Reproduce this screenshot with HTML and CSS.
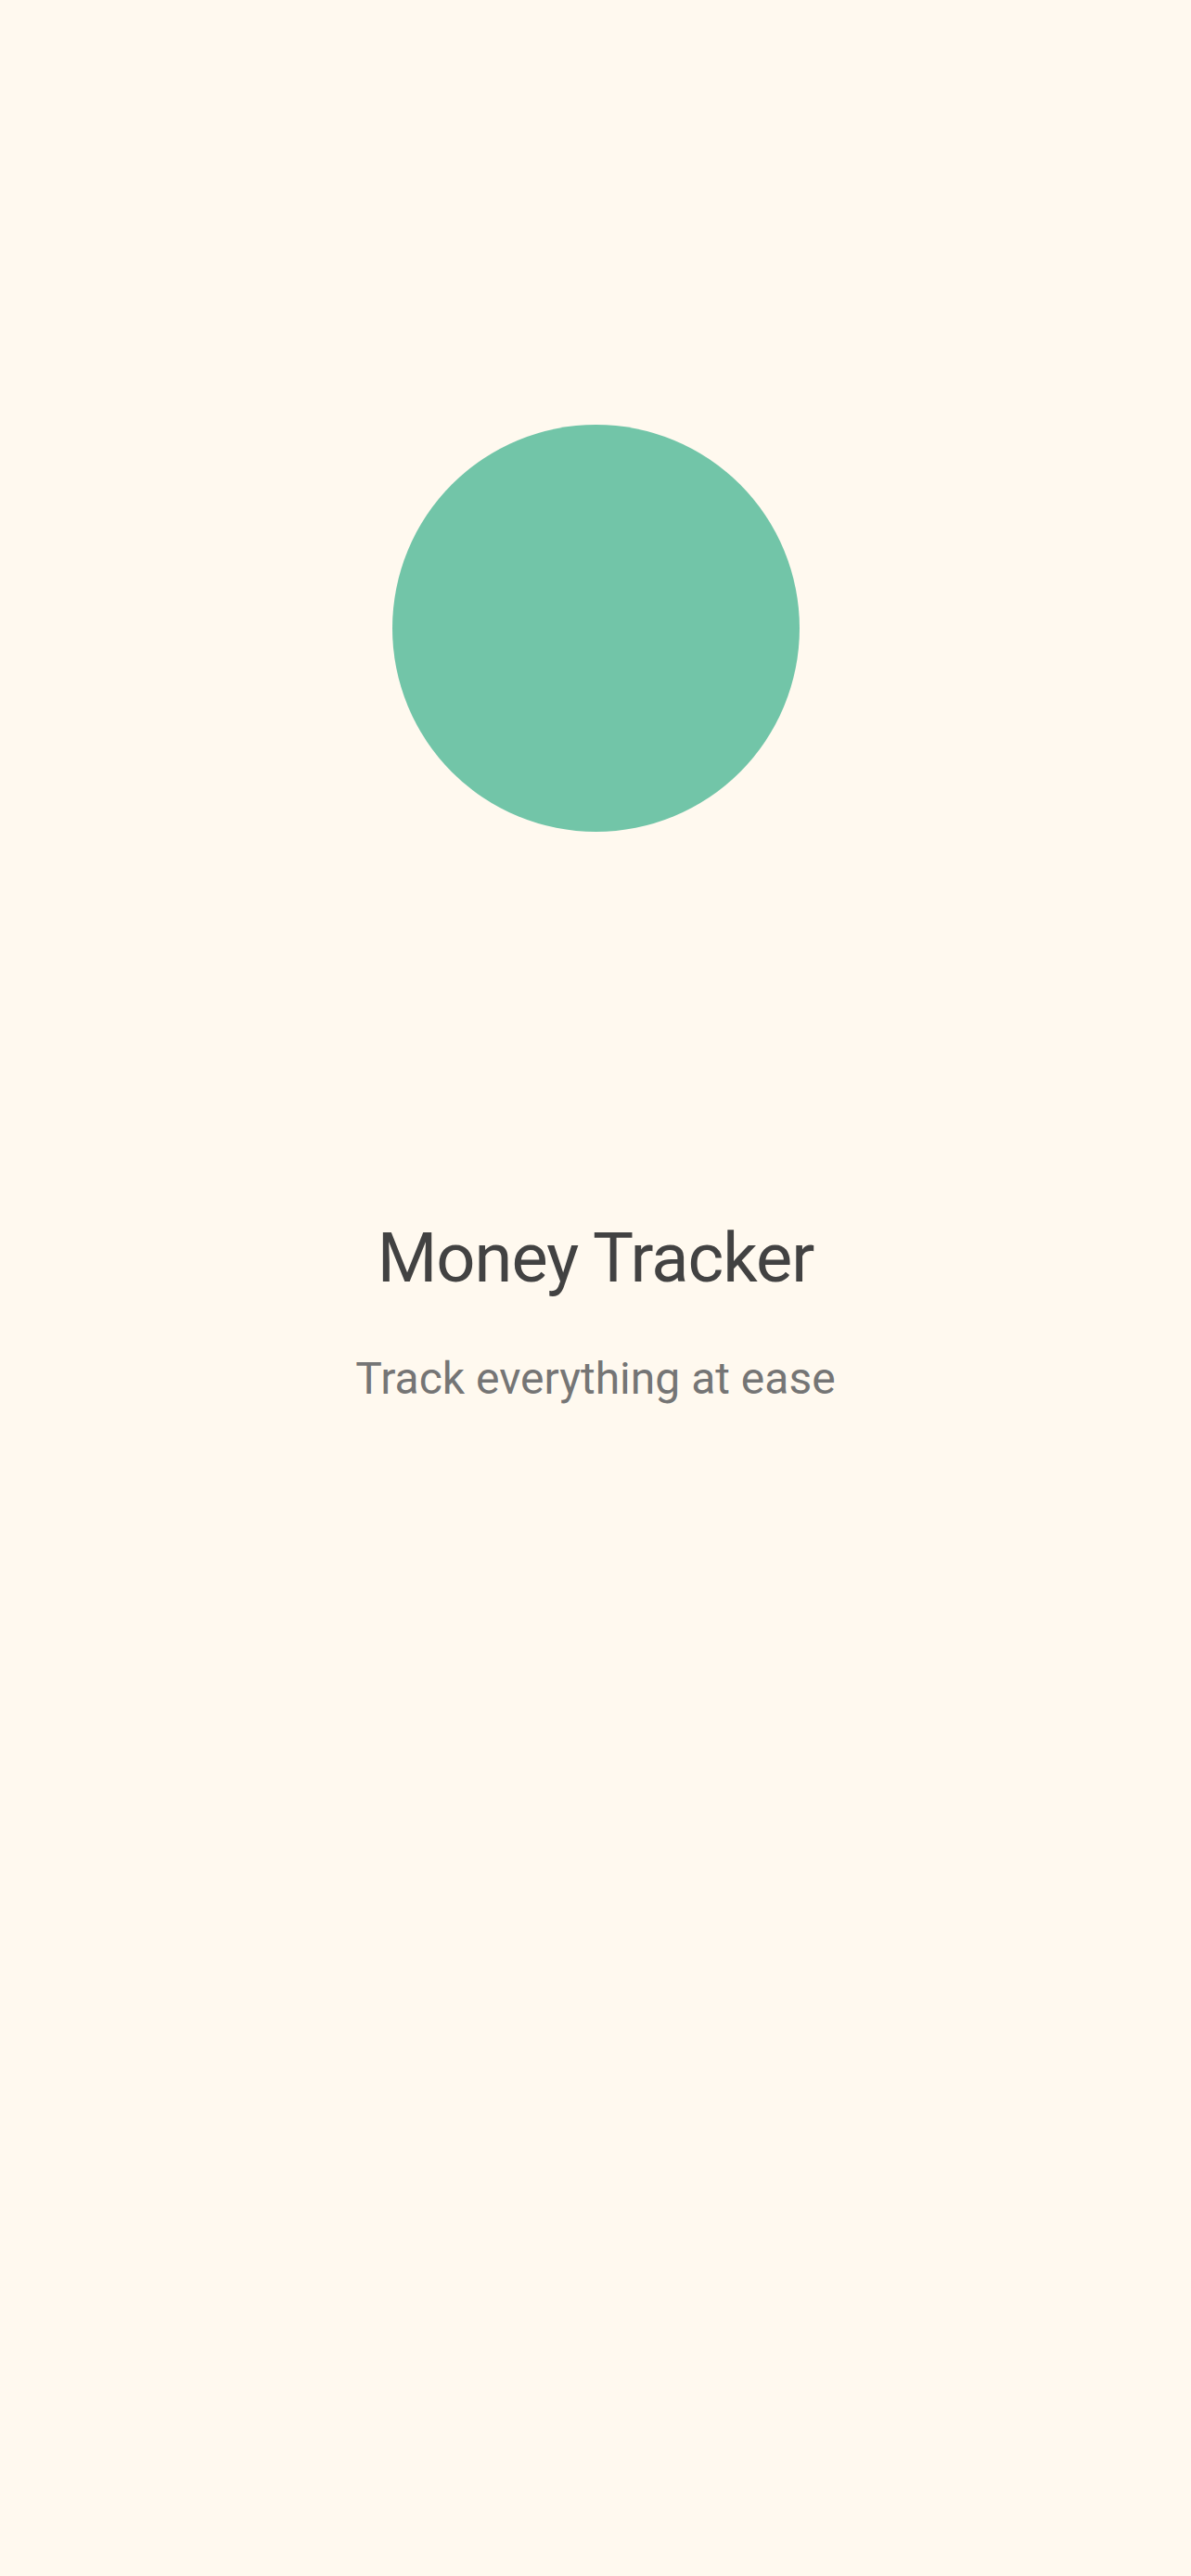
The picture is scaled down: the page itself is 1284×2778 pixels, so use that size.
FILE: index.html
```html
<!DOCTYPE html>
<html>
<head>
<meta charset="utf-8">
<link rel="stylesheet" href="styles.css">
</head>
<body>
<main class="splash">
  <div class="logo"></div>
  <h1 class="title">Money Tracker</h1>
  <p class="subtitle">Track everything at ease</p>
</main>
</body>
</html>
```

FILE: styles.css
```css
html, body {
  margin: 0;
  padding: 0;
  background: #fff9ef;
}
.splash {
  width: 1284px;
  height: 2778px;
  display: flex;
  flex-direction: column;
  align-items: center;
  font-family: Roboto, "Noto Sans", sans-serif;
}
.logo {
  width: 439px;
  height: 439px;
  border-radius: 50%;
  background: #72c5a8;
  margin-top: 458px;
}
.title {
  margin: 0;
  margin-top: 416px;
  font-size: 74px;
  font-weight: 400;
  line-height: 88px;
  letter-spacing: -1px;
  color: #424242;
}
.subtitle {
  margin: 0;
  margin-top: 58px;
  font-size: 48px;
  line-height: 56px;
  color: #757575;
}
```
